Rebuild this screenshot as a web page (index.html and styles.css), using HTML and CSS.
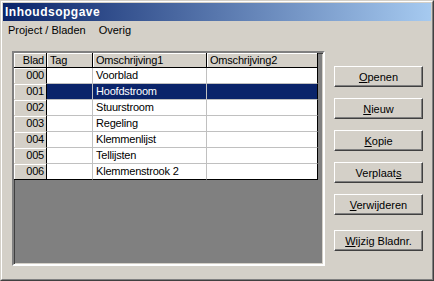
FILE: index.html
```html
<!DOCTYPE html>
<html>
<head>
<meta charset="utf-8">
<link rel="stylesheet" href="styles.css">
</head>
<body>
<div class="window">
  <div class="frame">
    <div class="titlebar">Inhoudsopgave</div>
    <div class="menubar">
      <span class="menu-item">Project / Bladen</span>
      <span class="menu-item">Overig</span>
    </div>
    <div class="client">
      <div class="grid">
        <div class="table">
          <div class="cell fixed head num">Blad</div>
          <div class="cell fixed head">Tag</div>
          <div class="cell fixed head">Omschrijving1</div>
          <div class="cell fixed head last-col">Omschrijving2</div>

          <div class="cell fixed num">000</div>
          <div class="cell"></div>
          <div class="cell">Voorblad</div>
          <div class="cell last-col"></div>

          <div class="cell fixed num">001</div>
          <div class="cell sel"></div>
          <div class="cell sel">Hoofdstroom</div>
          <div class="cell sel last-col"></div>

          <div class="cell fixed num">002</div>
          <div class="cell"></div>
          <div class="cell">Stuurstroom</div>
          <div class="cell last-col"></div>

          <div class="cell fixed num">003</div>
          <div class="cell"></div>
          <div class="cell">Regeling</div>
          <div class="cell last-col"></div>

          <div class="cell fixed num">004</div>
          <div class="cell"></div>
          <div class="cell">Klemmenlijst</div>
          <div class="cell last-col"></div>

          <div class="cell fixed num">005</div>
          <div class="cell"></div>
          <div class="cell">Tellijsten</div>
          <div class="cell last-col"></div>

          <div class="cell fixed num last-row">006</div>
          <div class="cell last-row"></div>
          <div class="cell last-row">Klemmenstrook 2</div>
          <div class="cell last-col last-row"></div>
        </div>
      </div>
      <div class="buttons">
        <button class="btn"><u>O</u>penen</button>
        <button class="btn"><u>N</u>ieuw</button>
        <button class="btn"><u>K</u>opie</button>
        <button class="btn">Verplaat<u>s</u></button>
        <button class="btn"><u>V</u>erwijderen</button>
        <button class="btn btn-gap"><u>W</u>ijzig Bladnr.</button>
      </div>
    </div>
  </div>
</div>
</body>
</html>
```
FILE: styles.css
```css
* { box-sizing: border-box; }
html, body { margin: 0; padding: 0; background: #d4d0c8; }
body {
  font-family: "Liberation Sans", Arial, sans-serif;
  font-size: 11px;
  color: #000;
}
.window {
  width: 434px;
  height: 281px;
  border: 1px solid;
  border-color: #d4d0c8 #404040 #404040 #d4d0c8;
  background: #d4d0c8;
}
.frame {
  height: 100%;
  border: 1px solid;
  border-color: #fff #808080 #808080 #fff;
  padding: 1px;
  display: flex;
  flex-direction: column;
}
.titlebar {
  height: 18px;
  line-height: 18px;
  padding-left: 2px;
  background: linear-gradient(to right, #0a246a, #a6caf0);
  color: #fff;
  font-weight: bold;
  font-size: 12px;
  letter-spacing: 0.5px;
}
.menubar {
  height: 19px;
  line-height: 19px;
  padding-left: 5px;
  display: flex;
  gap: 13px;
}
.client {
  display: flex;
  padding: 11px 0 0 9px;
}
.grid {
  width: 313px;
  height: 215px;
  border: 2px solid;
  border-color: #808080 #fff #fff #808080;
  box-shadow: inset 1px 1px 0 #404040, inset -1px -1px 0 #d4d0c8;
  background: #808080;
  padding: 0;
}
.table {
  display: grid;
  grid-template-columns: 33px 46px 114px 111px;
  grid-template-rows: 15px repeat(7, 16px);
  margin: 0;
}
.cell {
  background: #fff;
  border-right: 1px solid #c0c0c0;
  border-bottom: 1px solid #c0c0c0;
  line-height: 15px;
  padding: 0 3px;
  white-space: nowrap;
  overflow: hidden;
  letter-spacing: -0.2px;
}
.cell.fixed {
  background: #d4d0c8;
  border-right-color: #000;
  border-bottom-color: #d4d0c8;
  box-shadow: inset 1px 1px 0 #fff;
}
.cell.head {
  border-bottom-color: #000;
  line-height: 14px;
}
.cell.num { text-align: right; padding-right: 2px; }
.cell.last-col { border-right-color: #000; }
.cell.last-row { border-bottom-color: #000; }
.cell.sel { background: #0a246a; color: #fff; }
.buttons {
  display: flex;
  flex-direction: column;
  gap: 11px;
  margin-left: 9px;
  padding-top: 15px;
}
.btn {
  width: 89px;
  height: 21px;
  margin: 0;
  padding: 0;
  font-family: "Liberation Sans", Arial, sans-serif;
  font-size: 11px;
  color: #000;
  background: #d4d0c8;
  border: 1px solid;
  border-color: #fff #404040 #404040 #fff;
  box-shadow: inset -1px -1px 0 #808080;
  text-align: center;
}
.btn-gap { margin-top: 4px; }
```
